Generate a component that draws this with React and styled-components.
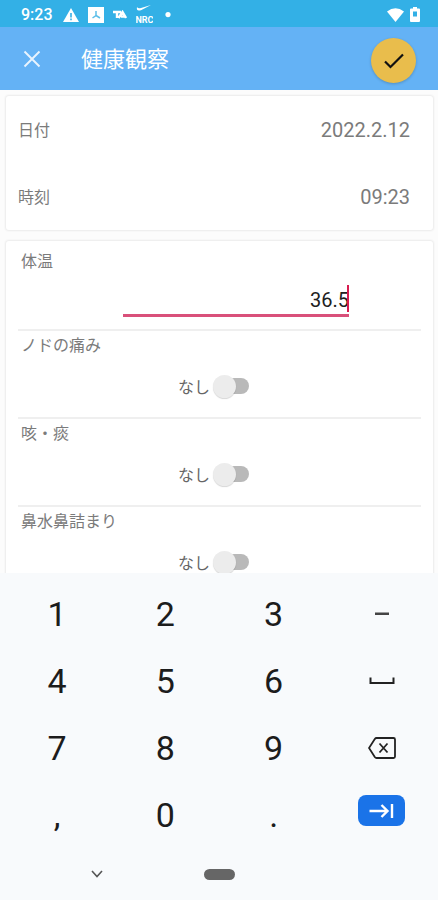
import React, { useState } from 'react'
import styled, { createGlobalStyle } from 'styled-components'

const GlobalStyle = createGlobalStyle`
  * {
    box-sizing: border-box;
  }

  body {
    margin: 0;
    background: #fcfcfc;
    font-family: Roboto, 'Noto Sans CJK JP', sans-serif;
  }

  button, input {
    font-family: inherit;
    padding: 0;
    border: none;
    background: none;
  }
`

const Screen = styled.div`
  display: flex;
  flex-direction: column;
  height: 100vh;
  overflow: hidden;
`

const StatusBar = styled.div`
  display: flex;
  align-items: center;
  flex-shrink: 0;
  height: 27px;
  padding: 2px 18px 0 21px;
  background: #33b0e6;
  color: #fff;
`

const Clock = styled.span`
  font-size: 16px;
  font-weight: 500;
  line-height: 20px;
  margin-right: 10px;
`

const StatusIcons = styled.div`
  display: flex;
  align-items: center;
  gap: ${(props) => props.$gap}px;
  margin-left: ${(props) => (props.$end ? 'auto' : '0')};

  svg {
    display: block;
  }
`

const Header = styled.header`
  display: flex;
  align-items: center;
  flex-shrink: 0;
  height: 63px;
  padding: 0 22px 0 20px;
  background: #64b2f5;
`

const CloseButton = styled.button`
  width: 24px;
  height: 24px;
  cursor: pointer;
`

const Title = styled.h1`
  flex: 1;
  margin: 2px 0 0 37px;
  color: #fff;
  font-size: 22px;
  font-weight: 400;
  line-height: 32px;
`

const SaveButton = styled.button`
  display: grid;
  place-items: center;
  width: 45px;
  height: 45px;
  margin-top: 4px;
  border-radius: 50%;
  background: #e9bd4c;
  box-shadow: 0 1px 3px rgba(0, 0, 0, 0.2);
  cursor: pointer;
`

const Content = styled.main`
  display: flex;
  flex-direction: column;
  flex: 1;
  gap: 11px;
  min-height: 0;
  padding: 6px 5px 0 6px;
  overflow: hidden;
`

const Card = styled.section`
  flex-shrink: 0;
  padding: 0 12px;
  border-radius: 3px;
  background: #fff;
  box-shadow: 0 0 2px 1px rgba(0, 0, 0, 0.07);
`

const InfoRow = styled.div`
  display: flex;
  align-items: center;
  justify-content: space-between;
  height: 67px;
  padding-right: 11px;
  color: #7b7b7b;
`

const InfoLabel = styled.span`
  padding-bottom: 2px;
  font-size: 16px;
`

const InfoValue = styled.span`
  font-size: 20px;
`

const Field = styled.div`
  padding-top: ${(props) => (props.$first ? 11 : 5)}px;
  border-bottom: 2px solid #efefef;
`

const FieldLabel = styled.label`
  display: block;
  padding-left: 3px;
  color: #7b7b7b;
  font-size: 16px;
  line-height: 20px;
`

const InputWrap = styled.div`
  position: relative;
  margin: 12px 72px 12px 105px;
`

const TemperatureInput = styled.input`
  display: block;
  width: 100%;
  height: 33px;
  padding-top: 2px;
  border-bottom: 3px solid #d9507a;
  color: #212121;
  font-size: 20px;
  text-align: right;
  outline: none;
  caret-color: transparent;
`

const Caret = styled.span`
  position: absolute;
  top: 1px;
  right: 0;
  width: 2px;
  height: 27px;
  background: #d81b4f;
`

const SwitchRow = styled.div`
  display: flex;
  align-items: center;
  justify-content: center;
  gap: 9px;
  height: 24px;
  margin: 18px 12px 19px 0;
  color: #666;
  font-size: 16px;
`

const Switch = styled.input`
  appearance: none;
  display: flex;
  align-items: center;
  width: 30px;
  height: 16px;
  margin: 0;
  border-radius: 8px;
  background: #b9b9b9;
  cursor: pointer;

  &::before {
    content: '';
    flex-shrink: 0;
    width: 23px;
    height: 23px;
    margin: 0 -6px;
    border-radius: 50%;
    background: #ececec;
    box-shadow: 0 1px 1px rgba(0, 0, 0, 0.16);
  }

  &:checked {
    justify-content: flex-end;
  }
`

const Keyboard = styled.div`
  flex-shrink: 0;
  padding-top: 7px;
  background: #f8fafc;
`

const Keys = styled.div`
  display: grid;
  grid-template-columns: repeat(4, 1fr);
  grid-auto-rows: 67px;
  padding: 0 2px 0 3px;
`

const Key = styled.button`
  display: grid;
  place-items: center;
  color: #1c1c1c;
  font-size: 34px;
  line-height: 40px;
  cursor: pointer;
`

const NextKey = styled.button`
  display: grid;
  place-items: center;
  justify-self: center;
  width: 47px;
  height: 31px;
  margin-top: 14px;
  border-radius: 8px;
  background: #1a73e8;
  cursor: pointer;
`

const NavBar = styled.nav`
  display: grid;
  grid-template-columns: 1fr auto 1fr;
  align-items: center;
  height: 52px;
`

const HideButton = styled.button`
  display: grid;
  place-items: center;
  height: 24px;
  margin-right: 9px;
`

const HomeButton = styled.button`
  width: 31px;
  height: 11px;
  border-radius: 6px;
  background: #666;
`

const symptoms = [
  { id: 'throat', label: 'ノドの痛み' },
  { id: 'cough', label: '咳・痰' },
  { id: 'nose', label: '鼻水鼻詰まり' },
]

const SpaceIcon = () => (
  <svg width='26' height='8' viewBox='0 0 26 8' fill='none' stroke='#222' strokeWidth='2'>
    <path d='M1.5 0.5V6H24.5V0.5' />
  </svg>
)

const BackspaceIcon = () => (
  <svg width='28' height='22' viewBox='0 0 28 22' fill='none' stroke='#222' strokeWidth='1.8'>
    <path d='M8.5 1H25.5Q27 1 27 2.500V19.500Q27 21 25.500 21H8.500Q7.500 21 6.800 20L1 11L6.800 2Q7.500 1 8.500 1Z' />
    <path d='M11.500 6.500L19.500 15.500M19.500 6.500L11.500 15.500' />
  </svg>
)

const MinusIcon = () => (
  <svg width='14' height='4' viewBox='0 0 14 4'>
    <rect y='0.500' width='14' height='2.500' fill='#444' />
  </svg>
)

const keys = [
  '1', '2', '3', { name: 'マイナス', icon: <MinusIcon /> },
  '4', '5', '6', { name: 'スペース', icon: <SpaceIcon /> },
  '7', '8', '9', { name: '削除', icon: <BackspaceIcon /> },
  ',', '0', '.',
]

const App = () => {
  const [temperature, setTemperature] = useState('36.5')
  const [checked, setChecked] = useState({})

  const toggle = (id) => setChecked({ ...checked, [id]: !checked[id] })

  const pressKey = (key) => {
    if (typeof key === 'string') {
      setTemperature(temperature + key)
    } else if (key.name === '削除') {
      setTemperature(temperature.slice(0, -1))
    }
  }

  return (
    <>
      <GlobalStyle />
      <Screen>
        <StatusBar>
          <Clock>9:23</Clock>
          <StatusIcons $gap={9}>
            <svg width='16' height='14' viewBox='0 0 16 14'>
              <path d='M8 0L16 14H0Z' fill='#fff' />
              <path d='M8 5V9.500M8 10.500V12.300' stroke='#33b0e6' strokeWidth='1.600' />
            </svg>
            <svg width='16' height='16' viewBox='0 0 16 16'>
              <rect width='16' height='16' fill='#fff' />
              <path d='M8 4V8.500L4.500 11M8 8.500L12 11' fill='none' stroke='#5cbfe9' strokeWidth='1.500' />
            </svg>
            <svg width='14' height='10' viewBox='0 0 14 10' fill='none' stroke='#fff' strokeWidth='2.400'>
              <path d='M0 2H8M4 2V8M5.500 8L9.500 2L13 8M8 6.500H12' />
            </svg>
            <svg width='17' height='20' viewBox='0 0 17 20'>
              <path d='M1 2Q2 4 5 3L15 0L5.500 5Q0 7 1 2Z' fill='#fff' />
              <text x='8.500' y='18' fill='#fff' fontSize='9' fontWeight='700' textAnchor='middle'>NRC</text>
            </svg>
            <svg width='9' height='6' viewBox='0 0 9 6'>
              <circle cx='6' cy='2.600' r='2.600' fill='#fff' />
            </svg>
          </StatusIcons>
          <StatusIcons $gap={6} $end>
            <svg width='17' height='14' viewBox='0 0 17 14'>
              <path d='M0 3.500Q8.500 -3 17 3.500L8.500 14Z' fill='#fff' />
            </svg>
            <svg width='10' height='15' viewBox='0 0 10 15'>
              <path d='M3 0H7V1.500H9Q10 1.500 10 2.500V14Q10 15 9 15H1Q0 15 0 14V2.500Q0 1.500 1 1.500H3Z' fill='#fff' />
              <rect x='3' y='4.500' width='4' height='5' fill='#33b0e6' />
            </svg>
          </StatusIcons>
        </StatusBar>

        <Header>
          <CloseButton aria-label='閉じる'>
            <svg width='24' height='24' viewBox='0 0 24 24' stroke='#e9f4fe' strokeWidth='1.900'>
              <path d='M4.500 4.500L19.500 19.500M19.500 4.500L4.500 19.500' />
            </svg>
          </CloseButton>
          <Title>健康観察</Title>
          <SaveButton aria-label='保存'>
            <svg width='20' height='16' viewBox='0 0 20 16' fill='none' stroke='#111' strokeWidth='2.200'>
              <path d='M1 8.500L6.500 14L19 1.500' />
            </svg>
          </SaveButton>
        </Header>

        <Content>
          <Card>
            <InfoRow>
              <InfoLabel>日付</InfoLabel>
              <InfoValue>2022.2.12</InfoValue>
            </InfoRow>
            <InfoRow>
              <InfoLabel>時刻</InfoLabel>
              <InfoValue>09:23</InfoValue>
            </InfoRow>
          </Card>

          <Card>
            <Field $first>
              <FieldLabel htmlFor='temperature'>体温</FieldLabel>
              <InputWrap>
                <TemperatureInput
                  id='temperature'
                  inputMode='decimal'
                  value={temperature}
                  onChange={(e) => setTemperature(e.target.value)}
                />
                <Caret />
              </InputWrap>
            </Field>
            {symptoms.map((item) => (
              <Field key={item.id}>
                <FieldLabel htmlFor={item.id}>{item.label}</FieldLabel>
                <SwitchRow>
                  <span>{checked[item.id] ? 'あり' : 'なし'}</span>
                  <Switch
                    id={item.id}
                    type='checkbox'
                    role='switch'
                    checked={!!checked[item.id]}
                    onChange={() => toggle(item.id)}
                  />
                </SwitchRow>
              </Field>
            ))}
          </Card>
        </Content>

        <Keyboard>
          <Keys>
            {keys.map((key) => (
              <Key
                key={key.name || key}
                aria-label={key.name}
                onClick={() => pressKey(key)}
              >
                {key.icon || key}
              </Key>
            ))}
            <NextKey aria-label='次へ'>
              <svg width='25' height='16' viewBox='0 0 25 16' fill='none' stroke='#fff' strokeWidth='2.400'>
                <path d='M0.500 8H18.500M12.500 2L18.500 8L12.500 14M23 1V15' />
              </svg>
            </NextKey>
          </Keys>
          <NavBar>
            <HideButton aria-label='キーボードを閉じる'>
              <svg width='12' height='8' viewBox='0 0 12 8' fill='none' stroke='#555' strokeWidth='1.600'>
                <path d='M1 1L6 6.500L11 1' />
              </svg>
            </HideButton>
            <HomeButton aria-label='ホーム' />
          </NavBar>
        </Keyboard>
      </Screen>
    </>
  )
}

export default App
